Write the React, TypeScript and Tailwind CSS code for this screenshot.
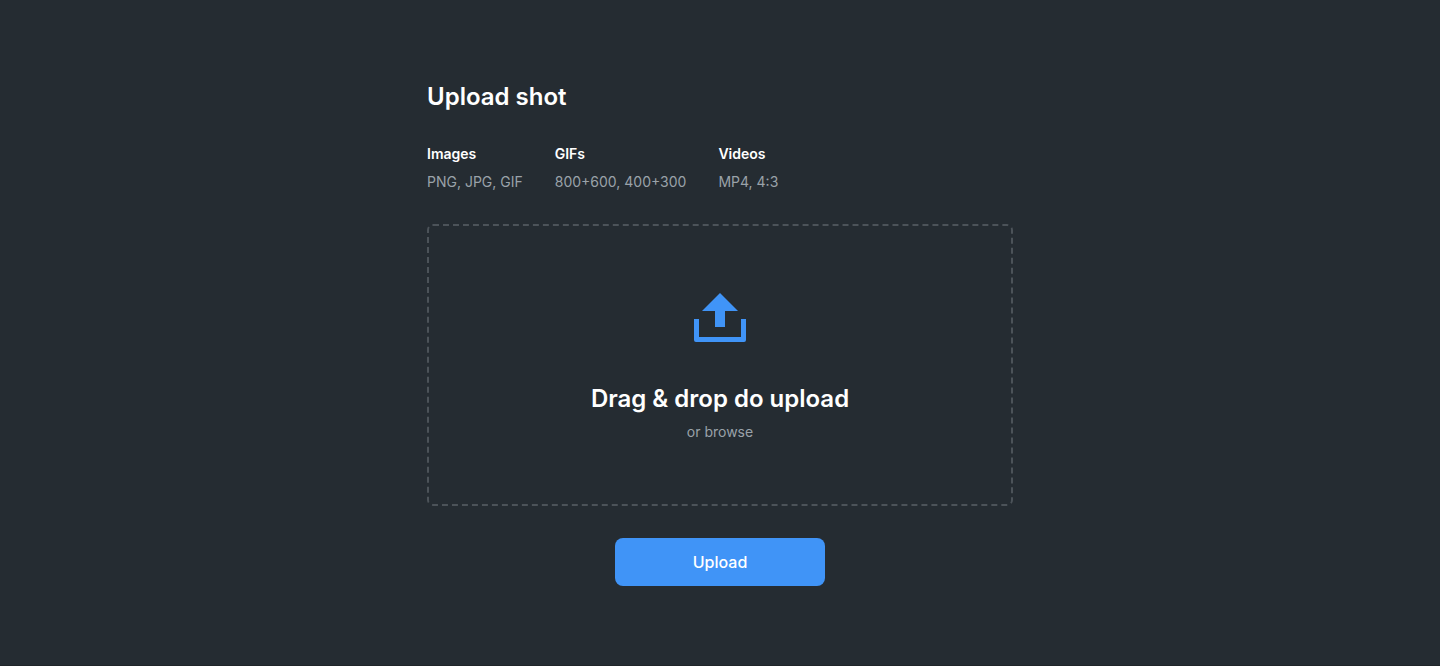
import { useState } from "react";

const formats = [
  { title: "Images", detail: "PNG, JPG, GIF" },
  { title: "GIFs", detail: "800+600, 400+300" },
  { title: "Videos", detail: "MP4, 4:3" },
];

function UploadIcon() {
  return (
    <svg viewBox="0 0 64 64" className="size-16 fill-[#4094f7]" aria-hidden="true">
      <path d="M32 5 L50 23 H37 V39 H27 V23 H14 Z" />
      <path d="M6 31 H11 V49 H53 V31 H58 V52 Q58 54 56 54 H8 Q6 54 6 52 Z" />
    </svg>
  );
}

export default function App() {
  const [, setFiles] = useState<FileList | null>(null);

  return (
    <main className="flex min-h-screen justify-center border-b border-[#202529] bg-[#252c32] px-6 pt-[81px] pb-[79px] font-['Inter',sans-serif] text-white">
      <form className="flex w-full max-w-[586px] flex-col gap-8" onSubmit={(e) => e.preventDefault()}>
        <header className="flex flex-col gap-[31px]">
          <h1 className="text-2xl font-semibold">Upload shot</h1>

          <dl className="flex flex-wrap gap-x-8 gap-y-4 text-sm">
            {formats.map((format) => (
              <div key={format.title} className="flex flex-col gap-2">
                <dt className="font-semibold">{format.title}</dt>
                <dd className="text-[#9aa2a9]">{format.detail}</dd>
              </div>
            ))}
          </dl>
        </header>

        <label
          className="flex cursor-pointer flex-col items-center gap-[31px] rounded-md border-2 border-dashed border-[#4c5359] px-6 py-[62px] text-center"
          onDragOver={(e) => e.preventDefault()}
          onDrop={(e) => {
            e.preventDefault();
            setFiles(e.dataTransfer.files);
          }}
        >
          <input type="file" multiple className="sr-only" onChange={(e) => setFiles(e.target.files)} />
          <UploadIcon />
          <span className="flex flex-col gap-[7px]">
            <span className="text-2xl font-semibold">Drag &amp; drop do upload</span>
            <span className="text-sm text-[#9aa2a9]">or browse</span>
          </span>
        </label>

        <button
          type="submit"
          className="h-12 w-full max-w-[210px] cursor-pointer self-center rounded-lg bg-[#4094f7] text-base font-medium"
        >
          Upload
        </button>
      </form>
    </main>
  );
}
